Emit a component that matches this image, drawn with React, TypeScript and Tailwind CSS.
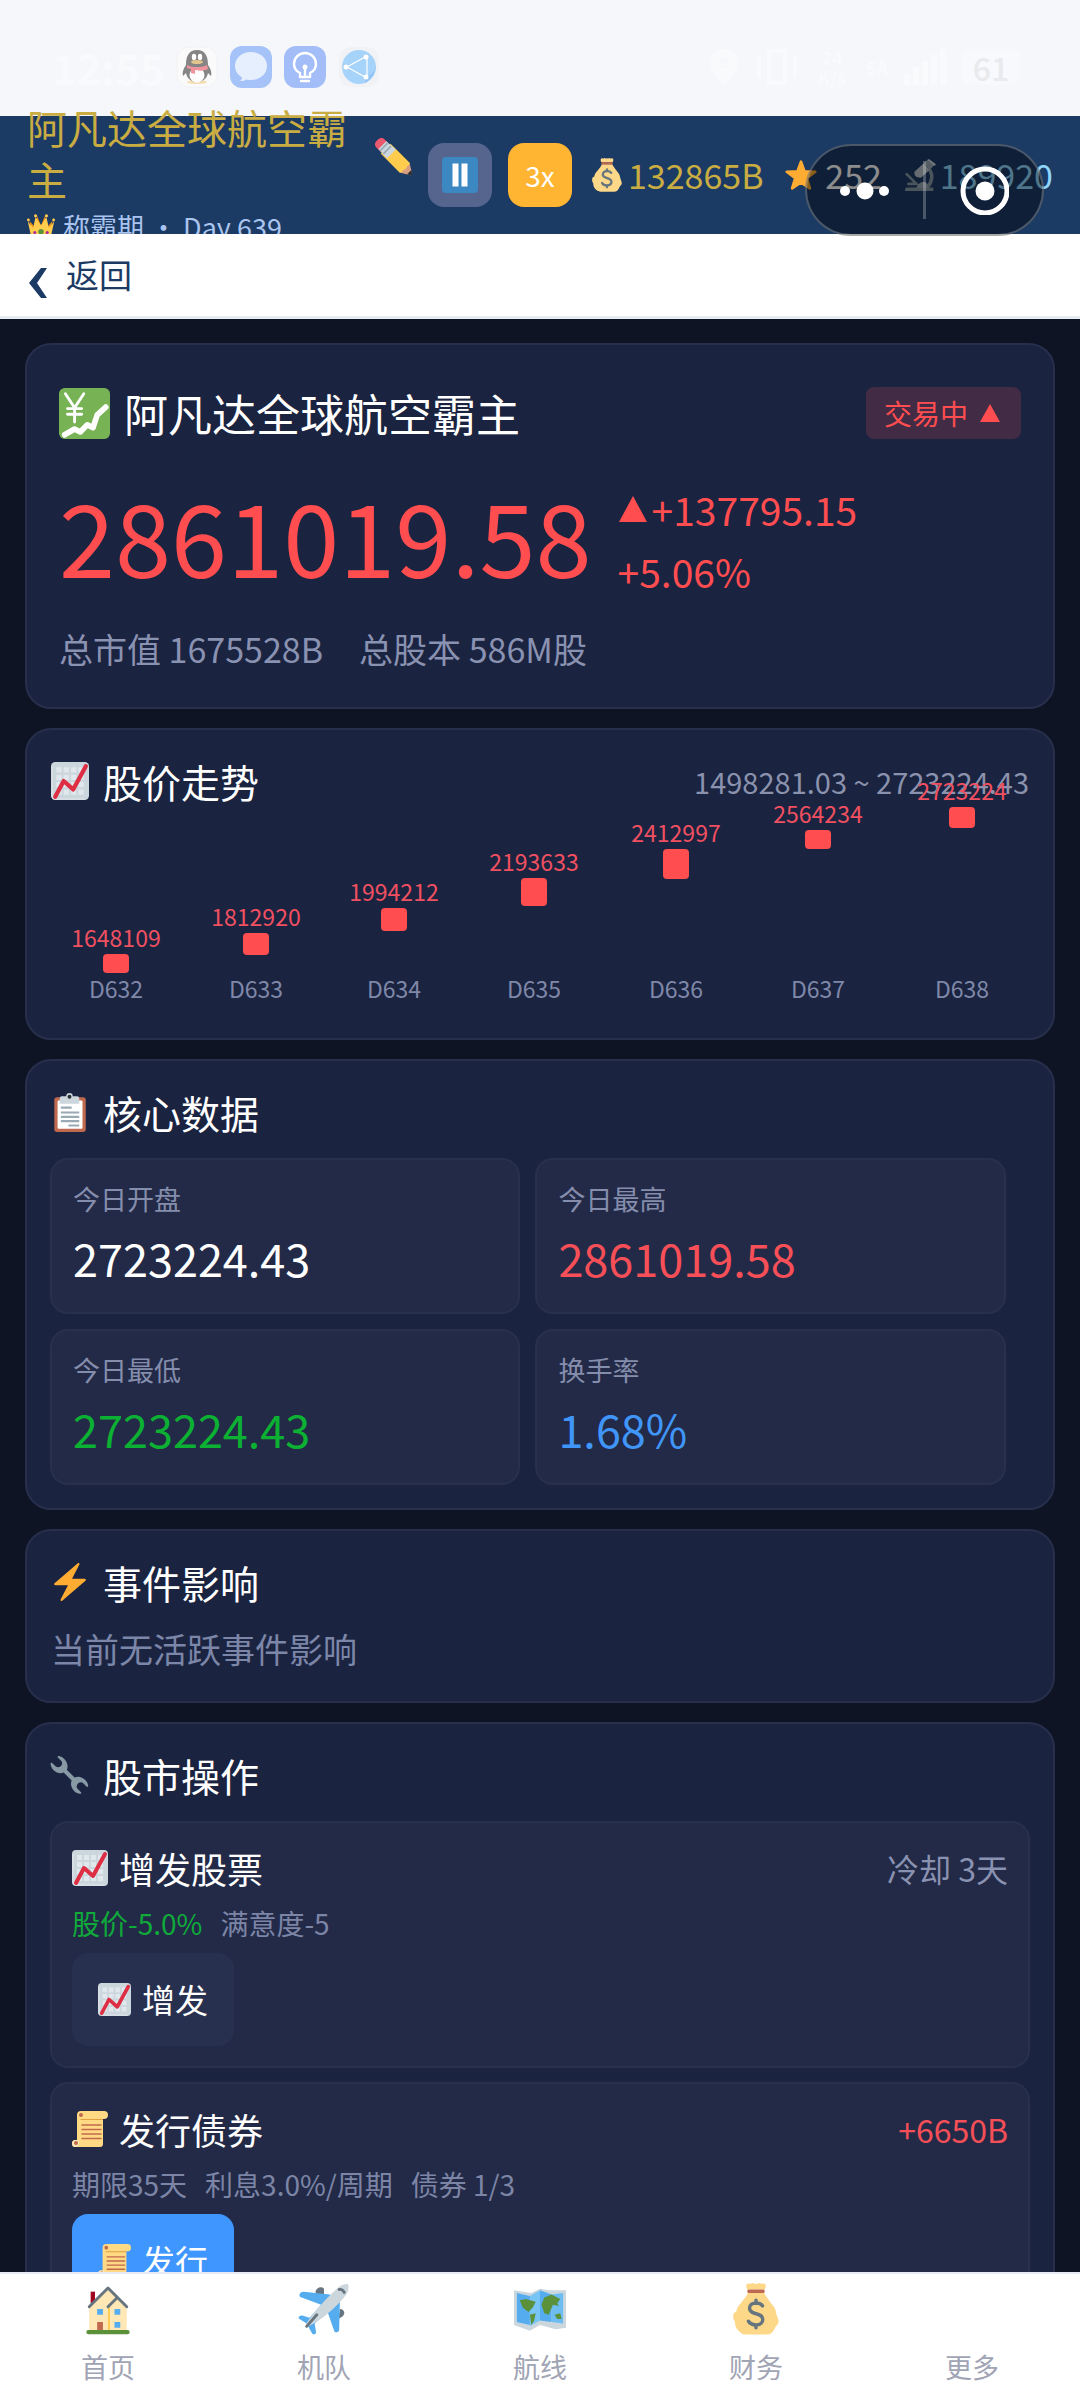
import type { ReactNode } from "react";
import { cva } from "class-variance-authority";
import clsx from "clsx";

interface IconProps {
    className?: string;
}

interface SvgProps extends IconProps {
    children: ReactNode;
}

function Svg({ className, children }: SvgProps) {
    return (
        <svg viewBox="0 0 36 36" className={clsx("shrink-0", className)} aria-hidden="true">
            {children}
        </svg>
    );
}

function ChartIcon({ className }: IconProps) {
    return (
        <Svg className={className}>
            <rect width="36" height="36" rx="4" fill="#CCD6DD" />
            <path
                fill="#E1E8ED"
                d="M5 5h5v5H5zM12 5h5v5h-5zM19 5h5v5h-5zM26 5h5v5h-5zM5 12h5v5H5zM12 12h5v5h-5zM19 12h5v5h-5zM26 12h5v5h-5zM5 19h5v5H5zM12 19h5v5h-5zM19 19h5v5h-5zM26 19h5v5h-5zM5 26h5v5H5zM12 26h5v5h-5zM19 26h5v5h-5zM26 26h5v5h-5z"
            />
            <path fill="none" stroke="#E1E8ED" strokeWidth="1" d="M1 4v28a3 3 0 0 0 3 3h28" />
            <path fill="none" stroke="#DD2E44" strokeWidth="4" strokeLinecap="round" strokeLinejoin="round" d="M4 33l8-15 9 8L33 4" />
        </Svg>
    );
}

function YenChartIcon({ className }: IconProps) {
    return (
        <Svg className={className}>
            <rect width="36" height="36" rx="4" fill="#77B255" />
            <path fill="none" stroke="#fff" strokeWidth="2" strokeLinecap="round" strokeLinejoin="round" d="M4.500 4l6.500 10 6.500-10M11 14v10M6 14.500h10M6 18.500h10" />
            <path fill="none" stroke="#fff" strokeWidth="4" strokeLinecap="round" strokeLinejoin="round" d="M4 33l7-4 4 2 5-5 4 2 3-9 6-5.500" />
        </Svg>
    );
}

function ClipboardIcon({ className }: IconProps) {
    return (
        <Svg className={className}>
            <rect x="4" y="4" width="29" height="32" rx="2.500" fill="#C1694F" />
            <rect x="7" y="7" width="23" height="26" rx="1" fill="#fff" />
            <path fill="#CCD6DD" d="M25 3h-4a3 3 0 0 0-6 0h-4a2 2 0 0 0-2 2v5h18V5a2 2 0 0 0-2-2z" />
            <circle cx="18" cy="3.500" r="1.800" fill="#292F33" />
            <path stroke="#99AAB5" strokeWidth="2" d="M10 13.500h10M10 18h17M10 22h17M10 26h17M17 30h10" />
        </Svg>
    );
}

function BoltIcon({ className }: IconProps) {
    return (
        <Svg className={className}>
            <path
                fill="#FFAC33"
                d="M32.938 15.651C32.792 15.260 32.418 15 32 15H19.925L26.890 1.458c.219-.426.106-.947-.271-1.243C26.437.071 26.218 0 26 0c-.233 0-.466.082-.653.243L18 6.588 3.347 19.243c-.316.273-.430.714-.284 1.105S3.582 21 4 21h12.075L9.110 34.542c-.219.426-.106.947.271 1.243.182.144.401.215.619.215.233 0 .466-.082.653-.243L18 29.412l14.653-12.655c.317-.273.430-.714.285-1.106z"
            />
        </Svg>
    );
}

function WrenchIcon({ className }: IconProps) {
    return (
        <Svg className={className}>
            <path
                fill="#8899A6"
                d="M27.500 19.300c-1.700-.300-3.300-.100-4.800.600L15.500 12.800c.700-1.500.900-3.200.500-4.900C15.200 4 12 .900 8.200.100c-1-.200-1.600.600-1 1.300l3.300 3.300c1 1.200.900 3.200-.400 4.600-1.400 1.400-3.500 1.500-4.700.500L2 6.500c-.700-.600-1.600-.100-1.500.900.500 4 3.500 7.400 7.500 8.300 1.600.400 3.200.200 4.600-.400l7.400 7.400c-.600 1.500-.800 3.100-.400 4.700.900 3.900 4.200 7 8.100 7.500 1 .100 1.500-.800.900-1.500l-3.300-3.300c-1.100-1.200-.900-3.300.500-4.700 1.300-1.300 3.400-1.500 4.600-.500l3.500 3.500c.700.600 1.500 0 1.400-1-.600-3.900-3.800-7.200-7.800-8.100z"
            />
        </Svg>
    );
}

function ScrollIcon({ className }: IconProps) {
    return (
        <Svg className={className}>
            <path fill="#FFD983" d="M32 0H9a4 4 0 0 0-4 4v25H3.500a3.500 3.500 0 0 0 0 7H28a3 3 0 0 0 3-3V8h1a4 4 0 0 0 0-8z" />
            <path fill="#E39F3D" d="M9 8h22v1H8zM7 29v3a4 4 0 0 1-3.500 4A3.500 3.500 0 0 0 7 32.500z" />
            <path fill="#FFE8B6" d="M3.500 29H7v3.500a3.500 3.500 0 1 1-3.500-3.500z" />
            <circle cx="9" cy="4" r="2" fill="#C1694F" />
            <circle cx="4" cy="32" r="2" fill="#C1694F" />
            <path stroke="#C1694F" strokeWidth="1.500" strokeLinecap="round" d="M10 14h19M10 18.500h19M10 23h19M10 27.500h19" />
        </Svg>
    );
}

function PencilIcon({ className }: IconProps) {
    return (
        <Svg className={className}>
            <path fill="#D99E82" d="M35.200 33.600l-2.600-10.400-9.400 9.400 10.400 2.600c1 .200 1.800-.600 1.600-1.600z" />
            <path fill="#EA596E" d="M13 5.200L8.700 1C7 -.500 4.500-.300 3 1.200L1.200 3C-.300 4.500-.500 7 1 8.700L5.200 13z" />
            <path fill="#FFCC4D" d="M32.600 23.200L14.800 5.400l-9.400 9.400 17.800 17.800c1.300.600 3-.300 3.400-2.300 2 0 3.400-1.500 3.600-3.600 2.100-.400 3-2.300 2.400-3.500z" />
            <path fill="#292F33" d="M35.200 33.600l-.800-3.200-4 4 3.200.800c1 .200 1.800-.600 1.600-1.600z" />
            <path fill="#CCD6DD" d="M10.700 3l9 8-8.400 8.400-8-9z" />
            <path fill="none" stroke="#99AAB5" strokeWidth="1.600" d="M12.200 4.700l-7.500 7.500M15.200 7.700l-7.500 7.500" />
        </Svg>
    );
}

function CrownIcon({ className }: IconProps) {
    return (
        <Svg className={className}>
            <path fill="#F4900C" d="M3 10l6 22h18l6-22-7 8-3-14-5 12-5-12-3 14z" />
            <path fill="#FFCC4D" d="M1 11l5 22h24l5-22-7 8-3-14-7 11-7-11-3 14z" />
            <circle cx="1.800" cy="9" r="1.800" fill="#FFCC4D" />
            <circle cx="11" cy="3.500" r="2" fill="#FFCC4D" />
            <circle cx="25" cy="3.500" r="2" fill="#FFCC4D" />
            <circle cx="34.200" cy="9" r="1.800" fill="#FFCC4D" />
            <circle cx="18" cy="24" r="3.500" fill="#5C913B" />
            <circle cx="10" cy="25" r="2" fill="#AA29A0" />
            <circle cx="26" cy="25" r="2" fill="#AA29A0" />
        </Svg>
    );
}

function PauseIcon({ className }: IconProps) {
    return (
        <Svg className={className}>
            <rect width="36" height="36" rx="4" fill="#3B88C3" />
            <path fill="#fff" d="M10.500 6.500h6v23h-6zM19.500 6.500h6v23h-6z" />
        </Svg>
    );
}

function MoneyBagIcon({ className }: IconProps) {
    return (
        <Svg className={className}>
            <path
                fill="#FDD888"
                d="M31.900 20.700c-.200-4-3.500-6-5.300-9.200C24.900 9 24 7.500 23.500 6.500h-11c-.500 1.500-1.500 3-3 5-2 3-4.500 4.500-5 8C2.300 20.500 2 22 2.300 24c.200 1.500.8 2 1.200 3-.2 3.500 1.500 5.500 4 7.500 1 1 2 1.200 3.500 1.200h14.500c1.500 0 2.500-.300 3.500-1.200 1.300-1.300 2-3 2.700-4.500 2-1.500 2.500-3.500 1.300-6-.5-1-.8-2.200-1.100-3.300zM24 4.500c.5-1 1-2 .5-3.500-.700-1-1.700-.600-2.500-.300-1-.900-2-.900-3 0-.700-.500-1.300-.500-2 0-1-.900-2-.900-3 0-.800-.300-1.800-.700-2.500.3-.5 1.500 0 2.500.5 3.500z"
            />
            <rect x="12" y="4.500" width="12" height="2.500" rx="1" fill="#BF6952" />
            <path fill="none" stroke="#67757F" strokeWidth="2.400" strokeLinecap="round" d="M22.500 15.800c-.8-1.300-2.400-2-4.500-2-2.700 0-4.500 1.500-4.500 3.700 0 5 9.200 2.600 9.200 7.700 0 2.300-2 3.800-4.700 3.800-2.300 0-4.200-.9-5.200-2.500M18 12v2M18 29v2" />
        </Svg>
    );
}

function StarIcon({ className }: IconProps) {
    return (
        <Svg className={className}>
            <path
                fill="#FFAC33"
                stroke="#FFAC33"
                strokeWidth="3"
                strokeLinejoin="round"
                d="M18 3l4 11 12 .3-9.500 7.200L28 33l-10-6.800L8 33l3.500-11.500L2 14.300 14 14z"
            />
        </Svg>
    );
}

function MicroscopeIcon({ className }: IconProps) {
    return (
        <Svg className={className}>
            <path fill="#8899A6" d="M3 32h30v4H1c0-2 .8-4 2-4z" />
            <path fill="none" stroke="#8899A6" strokeWidth="3" strokeLinecap="round" d="M3 17l11 11h-9" />
            <path fill="none" stroke="#8899A6" strokeWidth="4" d="M28 11c5 6 4 15-2 21" />
            <path fill="#99AAB5" d="M14 33c1-5 5-7 8-7s5 2 6 7z" />
            <path fill="#B8C4CE" d="M12 14L22 5l7 7-10 9c-6 0-8-3-7-7z" />
            <path fill="#99AAB5" d="M22 5l4-4 8 6-5 5z" />
            <path fill="#CCD6DD" d="M26 1l2-1 8 6-2 2z" />
        </Svg>
    );
}

function HouseIcon({ className }: IconProps) {
    return (
        <Svg className={className}>
            <path fill="#A0041E" d="M6 6h3v8H6z" />
            <path fill="#FFE8B6" d="M5 33V16L18 3l13 13v17z" />
            <path fill="#FFCC4D" d="M18 15h1.300v18H18z" />
            <path fill="none" stroke="#66757F" strokeWidth="2" strokeLinecap="round" strokeLinejoin="round" d="M5 16.500L18 3.500l13 13M18 16.500l6.500-6.500" />
            <path fill="#55ACEE" d="M10.500 18h4v4h-4zM22.500 18h4v4h-4zM22.500 27h4v4h-4z" />
            <path fill="#C1694F" d="M10.500 27h4v6h-4z" />
            <rect x="3" y="32.500" width="30" height="3" rx="1.500" fill="#5C913B" />
        </Svg>
    );
}

function PlaneIcon({ className }: IconProps) {
    return (
        <Svg className={className}>
            <path fill="#66757F" d="M12 6c1-3 4-4 6-2v5l-5-1zM29 18c3 0 4 3 2 5l-3 2z" />
            <path
                fill="#55ACEE"
                d="M22 8L4 6C2 6 1 7 1 8.500 1 9.500 2 10 3 10.200L16 15l-8 9-5-1.500c-1.500-.3-3 .8-2.500 2L6 28l3.500 6.500c1 2 3 1 3-.5L11.500 28l9-8 4.500 13c.5 1.500 3 1.500 3.500-.5L29 13z"
            />
            <path fill="#CCD6DD" d="M5.500 30.500C4.500 27 19 11 28 3c2.500-2.200 5-2.500 6.500-2.300C35.500 2 35 6 33 8.500 27 17 12 29 5.500 30.500z" />
            <path fill="none" stroke="#66757F" strokeWidth="2" strokeLinecap="round" d="M6 30l7-8M28.500 4.500c1.800-.3 2.800.5 3.500 2" />
        </Svg>
    );
}

function MapIcon({ className }: IconProps) {
    return (
        <Svg className={className}>
            <path fill="#CCD6DD" d="M0 5l12 2 6-3 6 1 12 0v26l-7 1-11-3-7 4-11-4z" />
            <path fill="#55ACEE" d="M2 7l9 2v20l-9-2z" />
            <path fill="#77C4F5" d="M11 9l7-4v21l-7 4z" />
            <path fill="#55ACEE" d="M18 5l8 3v19l-8-1z" />
            <path fill="#6DBDF2" d="M26 8l8-1v21l-8-1z" />
            <path fill="#5C913B" d="M4 12l4-1 7 2-2 4-3 3-4-3zM11 22l4-1-1 5-2 3zM19 15l2-5 5-2 6 3-2 3 1 2-4-1-3 7-3-1z" />
            <path fill="#5C913B" d="M28 22l4-1 1 4-3 0z" />
        </Svg>
    );
}

function QQIcon() {
    return (
        <svg viewBox="0 0 42 42" className="size-[42px]" aria-hidden="true">
            <rect x="1" y="1" width="40" height="40" rx="12" fill="#fafafb" stroke="#f2f2f4" />
            <ellipse cx="21" cy="36" rx="10" ry="2" fill="#f6dfb5" />
            <path fill="#858585" d="M10 19c0-9 3-15 11-15s11 6 11 15c3 4 4 8 3 11l-3-3c-2 12-20 12-22 0l-3 3c-1-3 0-7 3-11z" />
            <ellipse cx="21" cy="29" rx="7.500" ry="7.500" fill="#fdfdfd" />
            <ellipse cx="18" cy="11" rx="2.200" ry="3.200" fill="#fff" />
            <ellipse cx="24" cy="11" rx="2.200" ry="3.200" fill="#fff" />
            <ellipse cx="21" cy="16" rx="6" ry="2" fill="#e3c48c" />
            <path fill="#f0939d" d="M11 19c5 3 15 3 20 0l1 4c-4 2-10 2-13 1v4l-4-1v-4l-4-1z" />
        </svg>
    );
}

function ChatIcon() {
    return (
        <svg viewBox="0 0 42 42" className="size-[42px]" aria-hidden="true">
            <rect width="42" height="42" rx="12" fill="#a5c2f9" />
            <path fill="#e6effd" d="M21 6c9 0 16 6 16 14s-7 14-16 14c-2 0-3 0-5-.6-1 1-3 1.600-6 1.600 1.500-1 2-2 2-3.500C8 29 5 25 5 20 5 12 12 6 21 6z" />
        </svg>
    );
}

function BulbIcon() {
    return (
        <svg viewBox="0 0 42 42" className="size-[42px]" aria-hidden="true">
            <rect width="42" height="42" rx="12" fill="#a3bdf8" />
            <path fill="none" stroke="#fff" strokeWidth="2.400" strokeLinecap="round" strokeLinejoin="round" d="M16 31v-4c-4-2-6-5-6-9a11 11 0 0 1 22 0c0 4-2 7-6 9v4zM17 35h8M21 22v8" />
            <circle cx="21" cy="21" r="2.500" fill="#fff" />
        </svg>
    );
}

function GlobeIcon() {
    return (
        <svg viewBox="0 0 42 42" className="size-[42px]" aria-hidden="true">
            <rect x="1" y="1" width="40" height="40" rx="12" fill="#f1f2f5" />
            <circle cx="21" cy="21" r="17" fill="#a6d3f9" />
            <path fill="#93c4f6" d="M28 31c6-2 10-8 10-13 0 9-5 16-11 19z" />
            <path fill="none" stroke="#fff" strokeWidth="1.200" d="M9 21l18-10M9 21l18 10M29 12v19" />
            <circle cx="8" cy="21" r="2.500" fill="#fff" />
            <circle cx="28" cy="11" r="2.500" fill="#fff" />
            <circle cx="28" cy="31" r="2.500" fill="#fff" />
        </svg>
    );
}

function StatusBar() {
    return (
        <div className="h-[116px] shrink-0 flex items-start justify-between bg-[#f5f7fb] pl-[52px] pr-[60px] pt-[46px] text-[#f9fafc]">
            <div className="flex items-center gap-3">
                <span className="w-[112px] text-[42px] leading-[42px] font-bold">12:55</span>
                <QQIcon />
                <ChatIcon />
                <BulbIcon />
                <GlobeIcon />
            </div>
            <div className="flex items-center gap-4">
                <svg viewBox="0 0 32 42" className="h-[42px] w-[32px]" aria-hidden="true">
                    <path fill="#f9fafc" d="M16 3c9 0 14 6 14 14 0 9-7 16-14 22C9 33 2 26 2 17 2 9 7 3 16 3z" />
                    <path fill="#f5f7fb" d="M16 12a5 5 0 1 0 4 8h-6v-3h7a5 5 0 0 0-5-5z" />
                </svg>
                <svg viewBox="0 0 42 42" className="size-[42px]" aria-hidden="true">
                    <path fill="none" stroke="#f9fafc" strokeWidth="4" d="M3 10v22M39 10v22M13 5h16v32H13z" />
                </svg>
                <span className="w-[36px] text-center text-lg leading-5 font-bold">24 K/s</span>
                <span className="text-lg leading-5 font-bold">5A</span>
                <svg viewBox="0 0 42 36" className="h-[36px] w-[42px]" aria-hidden="true">
                    <path fill="#f9fafc" d="M0 24h6v12H0zM9 18h6v18H9zM18 12h6v24h-6zM27 6h6v30h-6zM36 0h6v36h-6z" />
                </svg>
                <span className="w-[58px] rounded-lg bg-[#f8f9fc] text-center text-[32px] leading-[36px] font-medium text-[#e8eaed]">61</span>
            </div>
        </div>
    );
}

function Header() {
    return (
        <header className="h-[118px] shrink-0 flex items-center bg-[#1b3a64] pl-[27px] pr-[27px] leading-none">
            <div className="flex w-[386px] items-center justify-between">
                <div className="w-[330px]">
                    <h1 className="text-[40px] leading-[52px] text-[#c9ad42]">阿凡达全球航空霸主</h1>
                    <p className="flex items-center gap-2 whitespace-nowrap text-[27px] leading-[44px] text-[#a9c4ee]">
                        <CrownIcon className="size-[28px]" />
                        称霸期 · Day 639
                    </p>
                </div>
                <button type="button" aria-label="改名" className="mb-9">
                    <PencilIcon className="size-[38px]" />
                </button>
            </div>
            <button type="button" aria-label="暂停" className="ml-[15px] flex size-[64px] shrink-0 items-center justify-center rounded-[16px] bg-[#56658d]">
                <PauseIcon className="size-[36px]" />
            </button>
            <button type="button" className="ml-4 size-[64px] shrink-0 rounded-[16px] bg-[#ffb432] text-[28px] text-white">
                3x
            </button>
            <div className="ml-[18px] flex flex-1 items-center justify-between whitespace-nowrap text-[34px]">
                <span className="flex items-center gap-1 text-[#c9ad42]">
                    <MoneyBagIcon className="size-[34px]" />
                    132865B
                </span>
                <span className="flex items-center gap-2 text-white">
                    <StarIcon className="size-[32px]" />
                    252
                </span>
                <span className="flex items-center gap-1 text-[#90d5fb]">
                    <MicroscopeIcon className="size-[32px]" />
                    189920
                </span>
            </div>
        </header>
    );
}

// mini-program menu that floats over the header
function Capsule() {
    return (
        <div className="absolute top-[144px] right-9 z-20 flex h-[92px] w-[239px] items-center rounded-full border-2 border-white/25 bg-black/45">
            <button type="button" aria-label="菜单" className="flex flex-1 justify-center">
                <svg viewBox="0 0 52 20" className="h-5 w-[52px]" fill="#fff" aria-hidden="true">
                    <circle cx="6" cy="11" r="5" />
                    <circle cx="26" cy="11" r="8.500" />
                    <circle cx="45" cy="11" r="5" />
                </svg>
            </button>
            <span className="h-[58px] w-[3px] bg-white/25" />
            <button type="button" aria-label="关闭" className="flex flex-1 justify-center">
                <svg viewBox="0 0 50 50" className="size-[50px]" aria-hidden="true">
                    <circle cx="26" cy="26" r="22" fill="none" stroke="#fff" strokeWidth="5" />
                    <circle cx="26" cy="26" r="9.500" fill="#fff" />
                </svg>
            </button>
        </div>
    );
}

function Card({ className, children }: { className?: string; children: ReactNode }) {
    return <section className={clsx("rounded-[26px] border-2 border-[#272f4c] bg-[#1a2340]", className)}>{children}</section>;
}

function SectionTitle({ icon, children }: { icon: ReactNode; children: ReactNode }) {
    return (
        <h2 className="flex items-center gap-[14px] text-[39px] leading-[56px] text-white">
            {icon}
            {children}
        </h2>
    );
}

function Quote() {
    return (
        <Card className="h-[366px] px-8 pt-[42px]">
            <div className="flex h-[52px] items-center justify-between">
                <h2 className="flex items-center gap-[14px] text-[44px] leading-[50px] text-white">
                    <YenChartIcon className="size-[51px]" />
                    阿凡达全球航空霸主
                </h2>
                <span className="flex h-[52px] items-center gap-3 rounded-lg bg-[#412b45] pr-[21px] pl-[18px] text-[28px] text-[#ff4d50]">
                    交易中
                    <svg viewBox="0 0 20 18" className="h-[18px] w-5" aria-hidden="true">
                        <path fill="#ff4d50" d="M10 0l10 18H0z" />
                    </svg>
                </span>
            </div>
            <div className="mt-[39px] flex h-[124px] items-start gap-[26px] text-[#ff4d50]">
                <strong className="text-[101px] leading-[112px] font-normal">2861019.58</strong>
                <div className="text-[39px] leading-[62px]">
                    <p className="flex items-center gap-1">
                        <svg viewBox="0 0 30 26" className="h-[26px] w-[30px]" aria-hidden="true">
                            <path fill="#ff4d50" d="M15 0l14 26H1z" />
                        </svg>
                        +137795.15
                    </p>
                    <p>+5.06%</p>
                </div>
            </div>
            <div className="mt-6 flex gap-9 text-[34px] leading-[46px] text-[#8a92b2]">
                <span>总市值 1675528B</span>
                <span>总股本 586M股</span>
            </div>
        </Card>
    );
}

interface Candle {
    day: string;
    value: string;
    x: number;
    y: number;
    h: number;
}

const CANDLES: Candle[] = [
    { day: "D632", value: "1648109", x: 65, y: 155, h: 19 },
    { day: "D633", value: "1812920", x: 205, y: 134, h: 22 },
    { day: "D634", value: "1994212", x: 343, y: 109, h: 23 },
    { day: "D635", value: "2193633", x: 483, y: 79, h: 28 },
    { day: "D636", value: "2412997", x: 625, y: 50, h: 30 },
    { day: "D637", value: "2564234", x: 767, y: 31, h: 19 },
    { day: "D638", value: "2723224", x: 911, y: 8, h: 21 },
];

function PriceTrend() {
    return (
        <Card className="h-[312px] px-[24px] pt-[23px]">
            <div className="flex items-center justify-between">
                <SectionTitle icon={<ChartIcon className="size-[38px]" />}>股价走势</SectionTitle>
                <span className="text-[29px] leading-[40px] text-[#8a92ad]">1498281.03 ~ 2723224.43</span>
            </div>
            <svg viewBox="0 0 978 204" className="-mt-[10px] w-full overflow-visible text-[23px]" textAnchor="middle" role="img" aria-label="股价走势">
                {CANDLES.map((c) => (
                    <g key={c.day}>
                        <text x={c.x} y={c.y - 7} fill="#f05060">
                            {c.value}
                        </text>
                        <rect x={c.x - 13} y={c.y} width="26" height={c.h} rx="4" fill="#ff4d50" />
                        <text x={c.x} y="199" fill="#7f88a8">
                            {c.day}
                        </text>
                    </g>
                ))}
            </svg>
        </Card>
    );
}

const statValue = cva("text-[45px] leading-[60px]", {
    variants: {
        tone: {
            plain: "text-white",
            up: "text-[#f64f57]",
            down: "text-[#0cb033]",
            info: "text-[#4096f8]",
        },
    },
});

interface Stat {
    label: string;
    value: string;
    tone: "plain" | "up" | "down" | "info";
}

const STATS: Stat[] = [
    { label: "今日开盘", value: "2723224.43", tone: "plain" },
    { label: "今日最高", value: "2861019.58", tone: "up" },
    { label: "今日最低", value: "2723224.43", tone: "down" },
    { label: "换手率", value: "1.68%", tone: "info" },
];

function CoreData() {
    return (
        <Card className="px-[23px] pt-[23px] pb-[23px]">
            <SectionTitle icon={<ClipboardIcon className="size-[39px]" />}>核心数据</SectionTitle>
            <dl className="mt-[18px] flex flex-wrap gap-[15px]">
                {STATS.map((stat) => (
                    <div key={stat.label} className="h-[156px] w-[48%] rounded-[18px] border-2 border-[#28304e] bg-[#222a47] px-[21px] pt-5">
                        <dt className="text-[27px] leading-[38px] text-[#858dac]">{stat.label}</dt>
                        <dd className={clsx("mt-[10px]", statValue({ tone: stat.tone }))}>{stat.value}</dd>
                    </div>
                ))}
            </dl>
        </Card>
    );
}

interface ActionProps {
    title: string;
    icon: (props: IconProps) => ReactNode;
    side: ReactNode;
    details: ReactNode;
    button: string;
    primary?: boolean;
}

function Action({ title, icon: Icon, side, details, button, primary }: ActionProps) {
    return (
        <article className="rounded-[18px] border-2 border-[#28304e] bg-[#222a47] px-5 pt-5 pb-5">
            <div className="flex h-[50px] items-center justify-between text-[32px]">
                <h3 className="flex items-center gap-[11px] text-[36px] text-white">
                    <Icon className="size-[36px]" />
                    {title}
                </h3>
                {side}
            </div>
            <p className="mt-[10px] flex gap-[18px] text-[28px] leading-[40px] text-[#7c85a6]">{details}</p>
            <button
                type="button"
                className={clsx(
                    "mt-[10px] flex h-[93px] items-center gap-[11px] rounded-[16px] px-[26px] text-[33px] text-white",
                    primary ? "bg-[#4096ff]" : "bg-[#28304f]",
                )}
            >
                <Icon className="size-[33px]" />
                {button}
            </button>
        </article>
    );
}

const TABS = [
    { label: "首页", icon: HouseIcon },
    { label: "机队", icon: PlaneIcon },
    { label: "航线", icon: MapIcon },
    { label: "财务", icon: MoneyBagIcon },
    { label: "更多", icon: null },
];

function TabBar() {
    return (
        <nav className="relative z-10 grid h-[118px] shrink-0 grid-cols-5 border-t-2 border-[#e8ebf5] bg-white">
            {TABS.map(({ label, icon: Icon }) => (
                <a key={label} href="#" className="flex flex-col items-center gap-3 pt-[9px] text-[27px] leading-[40px] text-[#a0a4b4]">
                    <span className="size-[52px]">{Icon && <Icon className="size-[52px]" />}</span>
                    {label}
                </a>
            ))}
        </nav>
    );
}

export default function App() {
    return (
        <div className="relative flex h-screen flex-col overflow-hidden bg-[#0e1424] font-['Noto_Sans_CJK_SC',sans-serif]">
            <StatusBar />
            <Header />
            <Capsule />
            <div className="relative z-10 h-[85px] shrink-0 border-b-[3px] border-[#e8ecf4] bg-white px-7">
                <button type="button" className="flex h-full items-center gap-[18px] text-[33px] text-[#1b3a64]">
                    <svg viewBox="0 0 20 30" className="mt-4 h-[30px] w-5" aria-hidden="true">
                        <path fill="#1b3a64" d="M13 0h6L9 15l10 15h-6L1 15z" />
                    </svg>
                    返回
                </button>
            </div>
            <main className="flex min-h-0 flex-1 flex-col gap-[19px] overflow-hidden px-[25px] pt-6 *:shrink-0">
                <Quote />
                <PriceTrend />
                <CoreData />
                <Card className="h-[174px] px-[24px] pt-[23px]">
                    <SectionTitle icon={<BoltIcon className="size-[38px]" />}>事件影响</SectionTitle>
                    <p className="mt-4 text-[34px] leading-[46px] text-[#7c86a8]">当前无活跃事件影响</p>
                </Card>
                <Card className="px-[23px] pt-[23px] pb-[23px]">
                    <SectionTitle icon={<WrenchIcon className="size-[39px]" />}>股市操作</SectionTitle>
                    <div className="mt-[18px] flex flex-col gap-[14px]">
                        <Action
                            title="增发股票"
                            icon={ChartIcon}
                            side={<span className="text-[#8a92b2]">冷却 3天</span>}
                            details={
                                <>
                                    <span className="text-[#10aa3a]">股价-5.0%</span>
                                    <span>满意度-5</span>
                                </>
                            }
                            button="增发"
                        />
                        <Action
                            title="发行债券"
                            icon={ScrollIcon}
                            side={<span className="text-[#f64f57]">+6650B</span>}
                            details={
                                <>
                                    <span>期限35天</span>
                                    <span>利息3.0%/周期</span>
                                    <span>债券 1/3</span>
                                </>
                            }
                            button="发行"
                            primary
                        />
                    </div>
                </Card>
            </main>
            <TabBar />
        </div>
    );
}
